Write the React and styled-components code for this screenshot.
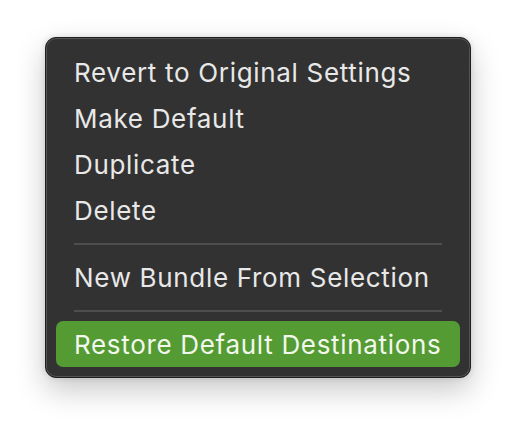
import React from "react";
import styled, { createGlobalStyle } from "styled-components";

const Global = createGlobalStyle`
  html, body { margin: 0; padding: 0; background: #ffffff; }
  body { font-family: Inter, "Noto Sans", sans-serif; }
`;

const Page = styled.div`
  width: 516px;
  height: 432px;
  box-sizing: border-box;
  padding: 37px 0 0 45px;
  background: #ffffff;
`;

const Menu = styled.div`
  width: 426px;
  box-sizing: border-box;
  padding: 11px 10px 10px 10px;
  background: #323232;
  border: 1px solid #1e1e1e;
  border-radius: 11px;
  box-shadow:
    inset 0 0 0 1px #545454,
    0 12px 30px rgba(0, 0, 0, 0.22),
    0 0 6px rgba(0, 0, 0, 0.12);
  display: flex;
  flex-direction: column;
`;

const Item = styled.div`
  height: 46px;
  display: flex;
  align-items: center;
  padding: 0 18px;
  border-radius: 7px;
  font-family: Inter, "Noto Sans", sans-serif;
  font-size: 26px;
  letter-spacing: 0.68px;
  color: ${(p) => (p.$active ? "#f2f7ee" : "#e8e8e8")};
  background: ${(p) => (p.$active ? "#539b32" : "transparent")};
  white-space: nowrap;
`;

const Separator = styled.div`
  height: 21px;
  display: flex;
  align-items: center;
  padding: 0 18px;
  &::after {
    content: "";
    flex: 1;
    height: 2px;
    background: #4e4e4e;
  }
`;

export default function App() {
  return (
    <>
      <Global />
      <Page>
        <Menu>
          <Item>Revert to Original Settings</Item>
          <Item>Make Default</Item>
          <Item>Duplicate</Item>
          <Item>Delete</Item>
          <Separator />
          <Item>New Bundle From Selection</Item>
          <Separator />
          <Item $active>Restore Default Destinations</Item>
        </Menu>
      </Page>
    </>
  );
}
